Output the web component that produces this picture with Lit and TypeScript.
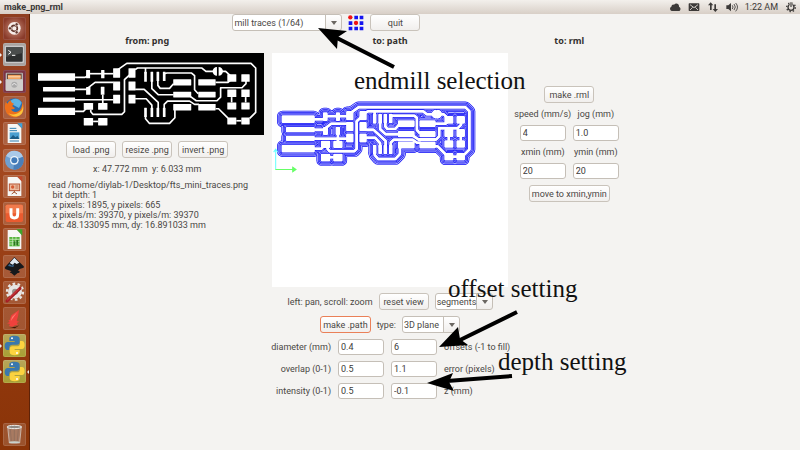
import { LitElement, html, svg, css } from "lit";
import { customElement, property } from "lit/decorators.js";

/* Board geometry, in a 702 x 246 drawing space. */
const PADS: number[][] = [
  [24, 61, 111, 22], [39, 102, 96, 13], [39, 133, 96, 13], [24, 164, 111, 22],
  [168, 51, 12, 25], [213, 51, 10, 25],
  [249, 46, 21, 28], [295, 46, 21, 28], [249, 85, 21, 27], [295, 85, 21, 27],
  [249, 125, 21, 26], [295, 125, 21, 26],
  [168, 102, 13, 23], [212, 101, 11, 24],
  [161, 150, 28, 20], [204, 150, 28, 20], [161, 195, 28, 22], [204, 195, 28, 22],
  [342, 56, 8, 30], [361, 56, 8, 30], [379, 56, 8, 28], [398, 56, 8, 28],
  [342, 164, 8, 28], [361, 164, 8, 28], [379, 164, 8, 28], [398, 164, 8, 28],
  [429, 79, 54, 18], [504, 79, 52, 18], [429, 116, 54, 17], [504, 116, 52, 17],
  [429, 153, 54, 19], [504, 153, 52, 19],
  [591, 64, 27, 22], [633, 64, 25, 22], [591, 109, 27, 23], [633, 109, 25, 23],
  [591, 148, 27, 21], [633, 148, 25, 21], [591, 193, 27, 21], [633, 193, 25, 21],
];

const TRACES: string[] = [
  "M135 73H165L174 67", "M174 62H250", "M135 109H168L195 88H250", "M135 140H250",
  "M218 125V150", "M135 175H160L168 167",
  "M182 170V176L189 184H275L283 176V80L300 64", "M189 205H204",
  "M260 52L290 31H662L676 45V178L658 196",
  "M315 50L322 45H515L527 55H550", "M574 55H586L600 68", "M556 88H593L600 82",
  "M346 45V62", "M315 109H342L384 148V172", "M315 137H348L365 156V172",
  "M346 187V197L358 211H418L434 194V167",
  "M402 62L410 60H484L493 68V110L504 122",
  "M383 82V97L390 106H418L430 92", "M365 82V107L384 125H430",
  "M402 172V154L412 144H478L493 154H506", "M480 130L498 143H560L571 132V104H635L647 92V84",
  "M556 167H565L593 195", "M604 132V148", "M646 132V148", "M618 203H633",
];

/* Copper grown outward by `grow` units on every side. */
const copper = (color: string, grow: number) => svg`
  <g fill=${color} stroke=${color} stroke-linejoin="round">
    <g stroke-width=${grow * 2}>
      ${PADS.map(([x, y, w, h]) => svg`<rect x=${x} y=${y} width=${w} height=${h} rx="1"/>`)}
      <path d="M560 42v26a13 13 0 0 1 0-26zM565 42v26a13 13 0 0 0 0-26z"/>
    </g>
    <g fill="none" stroke-width=${5 + grow * 2}>
      ${TRACES.map((d) => svg`<path d=${d}/>`)}
    </g>
  </g>`;

const PY = svg`
  <path fill="#3a78ad" d="M34 5c-12 0-15 4-15 9v7h16v3H14c-6 0-9 5-9 12s3 12 8 12h6v-7c0-6 4-9 9-9h14c5 0 8-3 8-8V14c0-6-5-9-16-9z"/>
  <path fill="#fcd33f" d="M51 21v8c0 5-4 8-9 8H28c-5 0-8 4-8 8v10c0 6 6 9 15 9 10 0 15-4 15-9v-7H35v-3h22c6 0 8-5 8-12s-3-12-8-12z"/>
  <circle cx="27" cy="13" r="3" fill="#fff"/><circle cx="42" cy="57" r="3" fill="#fff"/>`;

const PAGE = svg`<path fill="#f6f6f4" d="M14 6h29l12 12v45H14z"/>`;

interface App { name: string; tone: string; art: unknown; running?: boolean; active?: boolean }

const APPS: App[] = [
  { name: "Dash home", tone: "dash", art: svg`
    <circle cx="34" cy="34" r="19" fill="#f7eeea"/>
    <circle cx="34" cy="34" r="9" fill="none" stroke="#63382e" stroke-width="5"/>
    <g fill="#63382e" stroke="#f7eeea" stroke-width="2"><circle cx="21" cy="34" r="5"/><circle cx="41" cy="22" r="5"/><circle cx="41" cy="46" r="5"/></g>` },
  { name: "Terminal", tone: "silver", running: true, art: svg`
    <rect x="5" y="8" width="58" height="52" rx="4" fill="#c9c9c9"/>
    <rect x="9" y="13" width="50" height="43" rx="2" fill="#2d2f2f"/>
    <path d="M9 13h50v17L9 42z" fill="#4a4d4c"/>
    <path d="M16 22l8 6-8 6M27 37h10" fill="none" stroke="#fff" stroke-width="3"/>` },
  { name: "Files", tone: "plum", running: true, art: svg`
    <rect x="8" y="8" width="52" height="54" rx="3" fill="#b5b4b2"/>
    <rect x="12" y="11" width="44" height="17" fill="#6d4a3c"/>
    <path d="M15 15h38v12H15z" fill="#f2a35f"/><path d="M15 19h38v3H15z" fill="#fae0bd"/>
    <rect x="8" y="28" width="52" height="34" rx="3" fill="#cfcecc"/>
    <circle cx="34" cy="44" r="9" fill="#aaa"/><path d="M28 46c2-7 10-7 12 0" fill="none" stroke="#f4f4f4" stroke-width="3"/>` },
  { name: "Firefox", tone: "plain", art: svg`
    <circle cx="34" cy="35" r="28" fill="#2c6dae"/><path d="M18 20c9-15 30-16 38 0l-8 16z" fill="#5fb3e2"/>
    <path d="M8 18c-7 22 1 43 25 46 19 0 31-15 29-35l-4-11c-1 20-8 30-20 30-8 0-13-4-13-9 5 2 9 0 11-3-3-3-8-3-8-7l5-6c-6-1-9-5-10-10-5 2-8 6-9 10z" fill="#ec701c"/>
    <path d="M50 48c8-6 10-13 9-21 5 15-1 31-16 34-11 2-21-2-27-9 13 6 24 4 34-4z" fill="#fbc43c"/>` },
  { name: "Writer", tone: "plain", art: svg`${PAGE}
    <path fill="#3ba3dc" d="M43 4h15v16z"/><path stroke="#2f80b2" stroke-width="3" d="M20 19h20M20 26h22"/>
    <rect x="20" y="31" width="29" height="20" fill="#4b9fd0"/><path d="M20 51l10-12 8 7 5-5 6 10z" fill="#1d5c86"/><path stroke="#2f80b2" stroke-width="3" d="M20 57h28"/>` },
  { name: "Chromium", tone: "plain", art: svg`
    <circle cx="34" cy="34" r="28" fill="#6fa0d0"/><path d="M34 34L9 21A28 28 0 0 1 60 23z" fill="#a9c9e8"/><path d="M34 34l26-11c7 20-6 39-29 39z" fill="#4a7eb8"/>
    <circle cx="34" cy="34" r="13" fill="#eef5fb"/><circle cx="34" cy="34" r="9" fill="#427bb9"/>` },
  { name: "Impress", tone: "plain", art: svg`${PAGE}
    <path fill="#c3492c" d="M43 4h15v16z"/><rect x="19" y="27" width="31" height="20" fill="#edbb9f" stroke="#b55433" stroke-width="3"/>
    <path d="M34 47v6M26 57l8-6 8 6" fill="none" stroke="#a0522d" stroke-width="3"/><circle cx="29" cy="36" r="5" fill="#d55a32"/><path d="M37 33h9M37 39h9" stroke="#a0522d" stroke-width="2"/>` },
  { name: "Ubuntu One", tone: "plain", art: svg`
    <rect x="8" y="8" width="52" height="52" rx="5" fill="#ea5b2f"/><path d="M8 34V13q0-5 5-5h42q5 0 5 5v21z" fill="#f17a4c"/>
    <path d="M24 19v18q0 11 10 11t10-11V19" fill="none" stroke="#fff" stroke-width="9"/>` },
  { name: "Calc", tone: "plain", art: svg`${PAGE}
    <path fill="#3ea62b" d="M40 4h18v19z"/><rect x="19" y="27" width="31" height="28" fill="#55b43b"/>
    <path d="M19 34h31M19 41h31M19 48h31M29 27v28M39 27v28" stroke="#d6efcc" stroke-width="2"/><path d="M32 52V40h5v12zM40 52V36h5v16z" fill="#2a7520"/>` },
  { name: "Inkscape", tone: "plain", art: svg`
    <path d="M34 6L62 34c4 5-6 7-12 8l-5 5c9 2 5 6-1 7l-10 8-8-7c-8-1-6-4 0-6l-13-5c-7-2-10-5-6-9z" fill="#17191c"/>
    <path d="M34 8l15 15-8 4-6-4-6 6-9-5z" fill="#dfe9f3"/><path d="M19 27l8 5 7-6-3 10-16-3z" fill="#376793"/>` },
  { name: "Settings", tone: "plain", art: svg`
    <circle cx="36" cy="32" r="21" fill="#e7e6e4"/><circle cx="36" cy="32" r="24" fill="none" stroke="#e7e6e4" stroke-width="7" stroke-dasharray="8 7"/>
    <circle cx="36" cy="32" r="9" fill="#99918b"/><path d="M12 60L51 22" stroke="#a51d24" stroke-width="9" stroke-linecap="round"/><path d="M13 57L48 23" stroke="#d8474a" stroke-width="3"/>` },
  { name: "Reader", tone: "plain", art: svg`
    <path d="M16 60q20 3 33-5l-13 9z" fill="#401606"/><path d="M48 9L25 25l-5 14 -4 1 4 5-8 4 9 2-3 6 10 2 8-4 9-2-4-5 8-4-8-2 4-14z" fill="#ef413c"/><path d="M43 15L27 30l-4 13z" fill="#ff7b6d"/>` },
  { name: "Python", tone: "olive", running: true, art: PY },
  { name: "Python", tone: "olive", running: true, active: true, art: PY },
];

const TRASH = svg`
  <path d="M14 11h41l-5 49H19z" fill="#b9aaa2" fill-opacity=".45" stroke="#ddd6d1" stroke-width="2"/>
  <path d="M22 18l3 36M34 18v36M46 18l-3 36" stroke="#8a6a5b" stroke-width="2"/>
  <ellipse cx="34" cy="12" rx="22" ry="5" fill="#8f8a84" stroke="#f0efec" stroke-width="3"/>
  <ellipse cx="34" cy="58" rx="16" ry="3" fill="#c9d2cc"/>`;

@customElement("side-launcher")
export class SideLauncher extends LitElement {
  static styles = css`
    :host { display: flex; flex-direction: column; box-sizing: border-box; width: 30px; padding: 1px 0 4px;
      background: linear-gradient(#8f3e20, #a3481f 35%, #93390f 70%, #8a3408); border-right: 1px solid #5e2207; }
    .apps { flex: 1; display: grid; grid-auto-rows: 1fr; align-items: center; margin: 0 0 38px; padding: 0; list-style: none; }
    .item { position: relative; display: flex; padding-left: 3px; }
    .trash { padding-left: 3px; display: flex; }
    .tile { width: 23px; height: 23px; padding: 0; border: 0; border-radius: 2px; background: #ffffff26; box-shadow: inset 0 0 0 1px #ffffff1c; }
    .dash { background: radial-gradient(#c98f7b, #8a3b2a 75%); }
    .silver { background: #a9a3a0; }
    .plum { background: #7c3444; }
    .olive { background: linear-gradient(#b8a55a, #a8a033); }
    svg { display: block; width: 23px; height: 23px; }
    .running::before { content: ""; position: absolute; left: 0; top: 10px; border: 2px solid transparent; border-left-color: #eee; }
    .active::after { content: ""; position: absolute; right: 0; top: 10px; border: 2px solid transparent; border-right-color: #eee; }
  `;
  render() {
    return html`
      <ul class="apps">
        ${APPS.map((a) => html`
          <li class="item ${a.running ? "running" : ""} ${a.active ? "active" : ""}">
            <button class="tile ${a.tone}" aria-label=${a.name}><svg viewBox="0 0 69 69">${a.art}</svg></button>
          </li>`)}
      </ul>
      <div class="trash"><button class="tile" aria-label="Trash"><svg viewBox="0 0 69 69">${TRASH}</svg></button></div>`;
  }
}

@customElement("combo-box")
export class ComboBox extends LitElement {
  @property() value = "";
  @property() label = "";
  static styles = css`
    :host { display: block; position: relative; }
    .select { appearance: none; display: block; box-sizing: border-box; width: 100%; height: 17px; margin: 0; padding: 0 15px 0 1px;
      border: 1px solid #c5bfb7; border-radius: 3px; font: inherit; color: inherit;
      background: linear-gradient(#fff, #f0eeec) right / 15px 100% no-repeat, linear-gradient(#c5bfb7, #c5bfb7) right 15px top / 1px 100% no-repeat, #fff; }
    .arrow { position: absolute; right: 5px; top: 7px; width: 6px; height: 4px; pointer-events: none; }
  `;
  render() {
    return html`
      <select class="select" aria-label=${this.label}><option>${this.value}</option></select>
      <svg class="arrow" viewBox="0 0 6 4"><path d="M0 0h6L3 4z" fill="#6b6762"/></svg>`;
  }
}

@customElement("app-root")
export class AppRoot extends LitElement {
  static styles = css`
    :host { display: flex; flex-direction: column; position: relative; min-height: 100vh; overflow: hidden;
      background: #f4f3f1; color: #4a4744; font: 9px/10px Roboto, "Open Sans", sans-serif; }
    .bar { display: flex; align-items: center; height: 14px; box-sizing: border-box; padding: 0 3px 0 4px; gap: 7px;
      background: linear-gradient(#f3f0ec, #d8cfc7); color: #3c3a38; }
    .title { flex: 1; margin: 0; font-size: 9px; line-height: 14px; }
    .tray { width: 12px; height: 12px; }
    .tray, .clock { flex: none; }
    .status { display: flex; align-items: center; gap: 7px; }
    .body { flex: 1; display: flex; }
    .work { flex: 1; }
    .panel { width: 77%; min-width: 592px; }
    .tools { display: flex; justify-content: center; align-items: center; gap: 6px; height: 17px; }
    .mill { width: 110px; }
    .logo { width: 16px; height: 16px; }
    .columns { display: grid; grid-template-columns: 234fr 235fr 107fr; gap: 8px; }
    .column { min-width: 0; display: flex; flex-direction: column; align-items: center; gap: 6px; }
    .heading { margin: 0; padding: 5px 0 1px; font: bold 9px/10px "Noto Sans", sans-serif; color: #33302e; }
    .png { display: block; width: 100%; background: #000; }
    .path { display: block; width: 100%; background: #fff; }
    .row { display: flex; align-items: center; gap: 6px; }
    .btn { height: 17px; box-sizing: border-box; min-width: 50px; padding: 0 2px; border: 1px solid #c9c3bb; border-radius: 3px;
      background: linear-gradient(#fff, #f1efed); font: inherit; color: inherit; white-space: nowrap; }
    .focus { border-color: #ea8058; }
    .log { align-self: stretch; margin: 0 0 0 18px; font: inherit; white-space: pre; }
    .segments, .type { width: 58px; }
    .fields { display: grid; grid-template-columns: 60px 46px 46px 65px; gap: 6px 7px; align-items: center; white-space: nowrap; }
    .before { text-align: right; }
    .input { box-sizing: border-box; width: 46px; height: 16px; margin: 0; padding: 0 2px; border: 1px solid #c5bfb7; border-radius: 3px;
      background: #fff; font: inherit; color: #3c3a38; }
    .rml .heading { padding-bottom: 34px; }
    .pairs { display: grid; grid-template-columns: 46px 46px; gap: 6px 7px; white-space: nowrap; }
    .pair { display: flex; flex-direction: column; align-items: center; gap: 6px; line-height: 10px; }
    .notes { position: absolute; left: 0; top: 0; width: 800px; height: 450px; pointer-events: none; }
    .note { position: absolute; margin: 0; font: 25px/26px "Liberation Serif", serif; color: #111; white-space: nowrap; }
    .endmill { left: 354px; top: 68px; }
    .offset { left: 448px; top: 276px; }
    .depth { left: 498px; top: 349px; }
  `;

  render() {
    return html`
      <header class="bar">
        <h1 class="title">make_png_rml</h1>
        <div class="status">
          <svg class="tray" viewBox="0 0 36 36" fill="#3c3a38"><path d="M8 30a7 7 0 0 1-1-13 7 7 0 0 1 8-6c6-7 16-3 15 6 7 3 5 13-1 13z"/></svg>
          <svg class="tray" viewBox="0 0 36 36"><rect x="2" y="7" width="32" height="23" rx="2" fill="#3c3a38"/><path d="M6 11l12 9 12-9M6 27l8-8M30 27l-8-8" fill="none" stroke="#e8e2dc" stroke-width="2.5"/></svg>
          <svg class="tray" viewBox="0 0 36 36" fill="#3c3a38"><path d="M11 4l8 9h-5v14H9V13H3zM25 33l-8-9h5V10h5v14h6z"/></svg>
          <svg class="tray" viewBox="0 0 36 36"><path d="M1 13h6l8-7v25l-8-7H1z" fill="#3c3a38"/><path d="M19 13q4 5 0 11M24 9q8 9 0 18M29 6q11 12 0 25" fill="none" stroke="#3c3a38" stroke-width="2.5"/></svg>
        </div>
        <span class="clock">1:22 AM</span>
        <svg class="tray" viewBox="0 0 36 36" fill="none" stroke="#3c3a38"><circle cx="18" cy="19" r="9" stroke-width="4"/><circle cx="18" cy="19" r="13" stroke-width="4" stroke-dasharray="4.2 6"/><path d="M18 3v16" stroke="#e8e2dc" stroke-width="8"/><path d="M18 4v14" stroke-width="3.5"/></svg>
      </header>
      <div class="body">
        <side-launcher></side-launcher>
        <main class="work"><div class="panel">
          <div class="tools">
            <combo-box class="mill" label="Process" value="mill traces (1/64)"></combo-box>
            <svg class="logo" viewBox="0 0 48 48">
              <g fill="#1414f0"><path d="M19 2h11v11H19zM35 2h11v11H35zM2 19h11v11H2zM35 19h11v11H35zM2 35h11v11H2zM19 35h11v11H19zM35 35h11v11H35z"/></g>
              <g fill="#f01414"><circle cx="7" cy="7" r="6.5"/><circle cx="24" cy="24" r="6.5"/></g>
            </svg>
            <button class="btn">quit</button>
          </div>
          <div class="columns">
            <section class="column">
              <h2 class="heading">from: png</h2>
              <svg class="png" viewBox="0 0 702 246">${copper("#fff", 0)}</svg>
              <div class="row"><button class="btn">load .png</button><button class="btn">resize .png</button><button class="btn">invert .png</button></div>
              <div class="coords">x: 47.772 mm&nbsp; y: 6.033 mm</div>
              <pre class="log">read /home/diylab-1/Desktop/fts_mini_traces.png
  bit depth: 1
  x pixels: 1895, y pixels: 665
  x pixels/m: 39370, y pixels/m: 39370
  dx: 48.133095 mm, dy: 16.891033 mm</pre>
            </section>
            <section class="column">
              <h2 class="heading">to: path</h2>
              <svg class="path" viewBox="0 0 705 702">
                <g transform="translate(10 136) scale(.86)">
                  ${copper("#1010f4", 18)}${copper("#d0d0ff", 15.5)}${copper("#1010f4", 13)}
                  ${copper("#a8a8fe", 10.5)}${copper("#1010f4", 8.5)}${copper("#c0c0ff", 6.5)}${copper("#1010f4", 5)}${copper("#fff", 2.5)}
                </g>
                <path d="M11 348V288M5 297l6-9 6 9" fill="none" stroke="#6ff" stroke-width="3"/>
                <path d="M10 349H72M62 342l10 7-10 7z" fill="#6f6" stroke="#6f6" stroke-width="3"/>
              </svg>
              <div class="row"><span>left: pan, scroll: zoom</span><button class="btn">reset view</button><combo-box class="segments" label="View" value="segments"></combo-box></div>
              <div class="row"><button class="btn focus">make .path</button><span>type:</span><combo-box class="type" label="Type" value="3D plane"></combo-box></div>
              <div class="fields">
                <label class="before" for="diameter">diameter (mm)</label><input class="input" id="diameter" value="0.4"><input class="input" id="offsets" value="6"><label for="offsets">offsets (-1 to fill)</label>
                <label class="before" for="overlap">overlap (0-1)</label><input class="input" id="overlap" value="0.5"><input class="input" id="error" value="1.1"><label for="error">error (pixels)</label>
                <label class="before" for="intensity">intensity (0-1)</label><input class="input" id="intensity" value="0.5"><input class="input" id="z" value="-0.1"><label for="z">z (mm)</label>
              </div>
            </section>
            <section class="column rml">
              <h2 class="heading">to: rml</h2>
              <button class="btn">make .rml</button>
              <div class="pairs">
                <label class="pair">speed (mm/s)<input class="input" value="4"></label>
                <label class="pair">jog (mm)<input class="input" value="1.0"></label>
                <label class="pair">xmin (mm)<input class="input" value="20"></label>
                <label class="pair">ymin (mm)<input class="input" value="20"></label>
              </div>
              <button class="btn">move to xmin,ymin</button>
            </section>
          </div>
        </div></main>
      </div>
      <svg class="notes" viewBox="0 0 800 450">
        <g stroke="#000" stroke-width="4"><path d="M394 67L335 37M517 312L456 342M512 376L447 381"/></g>
        <path d="M318 28l29 3-9 6-1 12zM439 347l19-20 2 12 8 6zM427 383l26-10-4 9 5 9z"/>
      </svg>
      <p class="note endmill">endmill selection</p>
      <p class="note offset">offset setting</p>
      <p class="note depth">depth setting</p>`;
  }
}
